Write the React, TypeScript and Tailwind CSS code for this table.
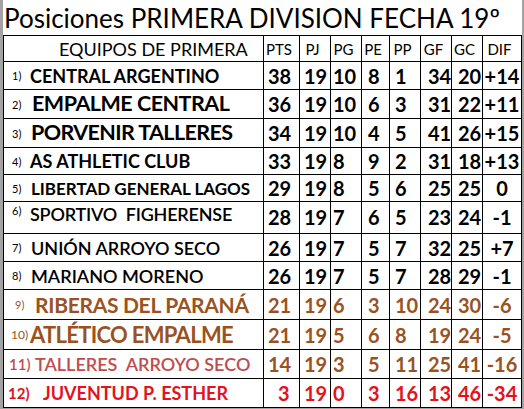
import React from "react";

type Row = {
  pos: string;
  name: string;
  stats: string[];
  h: string; // row height class
  labelCls: string;
  nameCls: string;
  numCls: string;
  top?: boolean;
};

const cols = "grid-cols-[260px_36px_31px_31px_28px_31px_31px_31px_39px]";

// per-column padding for the numbers
const numPad = [
  "pl-[4px]",
  "pl-[4px]",
  "pl-[2px]",
  "pl-[6px]",
  "pl-[5px]",
  "pl-[7px]",
  "pl-[6px]",
  "justify-center",
];

const black = "text-black";
const brown = "text-[#9a531f]";
const rose = "text-[#bf4c50]";
const red = "text-[#e3121c]";

const rows: Row[] = [
  {
    pos: "1)",
    name: "CENTRAL ARGENTINO",
    stats: ["38", "19", "10", "8", "1", "34", "20", "+14"],
    h: "h-[28px]",
    labelCls: `${black} text-[11px] w-[26px] pl-[8px]`,
    nameCls: `${black} text-[18px] font-bold`,
    numCls: black,
  },
  {
    pos: "2)",
    name: "EMPALME CENTRAL",
    stats: ["36", "19", "10", "6", "3", "31", "22", "+11"],
    h: "h-[29px]",
    labelCls: `${black} text-[11px] w-[28px] pl-[8px]`,
    nameCls: `${black} text-[21.5px] font-bold tracking-[-0.5px]`,
    numCls: black,
  },
  {
    pos: "3)",
    name: "PORVENIR TALLERES",
    stats: ["34", "19", "10", "4", "5", "41", "26", "+15"],
    h: "h-[29px]",
    labelCls: `${black} text-[11px] w-[27px] pl-[8px]`,
    nameCls: `${black} text-[21.5px] font-bold tracking-[-0.6px]`,
    numCls: black,
  },
  {
    pos: "4)",
    name: "AS ATHLETIC CLUB",
    stats: ["33", "19", "8", "9", "2", "31", "18", "+13"],
    h: "h-[27px]",
    labelCls: `${black} text-[11px] w-[26px] pl-[8px]`,
    nameCls: `${black} text-[18px] font-bold`,
    numCls: black,
  },
  {
    pos: "5)",
    name: "LIBERTAD GENERAL LAGOS",
    stats: ["29", "19", "8", "5", "6", "25", "25", "0"],
    h: "h-[27px]",
    labelCls: `${black} text-[11px] w-[27px] pl-[8px]`,
    nameCls: `${black} text-[17px] font-bold`,
    numCls: black,
  },
  {
    pos: "6)",
    name: "SPORTIVO  FIGHERENSE",
    stats: ["28", "19", "7", "6", "5", "23", "24", "-1"],
    h: "h-[32px]",
    labelCls: `${black} text-[11px] w-[26px] pl-[8px]`,
    nameCls: `${black} text-[18px] font-semibold whitespace-pre tracking-[-0.2px]`,
    numCls: black,
    top: true,
  },
  {
    pos: "7)",
    name: "UNIÓN ARROYO SECO",
    stats: ["26", "19", "7", "5", "7", "32", "25", "+7"],
    h: "h-[28px]",
    labelCls: `${black} text-[11px] w-[27px] pl-[8px]`,
    nameCls: `${black} text-[18px] font-semibold`,
    numCls: black,
  },
  {
    pos: "8)",
    name: "MARIANO MORENO",
    stats: ["26", "19", "7", "5", "7", "28", "29", "-1"],
    h: "h-[28px]",
    labelCls: `${black} text-[11px] w-[27px] pl-[8px]`,
    nameCls: `${black} text-[18px] font-semibold`,
    numCls: black,
  },
  {
    pos: "9)",
    name: "RIBERAS DEL PARANÁ",
    stats: ["21", "19", "6", "3", "10", "24", "30", "-6"],
    h: "h-[30px]",
    labelCls: `${brown} text-[11px] w-[31px] pl-[11px]`,
    nameCls: `${brown} text-[21px] font-bold tracking-[-0.3px]`,
    numCls: brown,
  },
  {
    pos: "10)",
    name: "ATLÉTICO EMPALME",
    stats: ["21", "19", "5", "6", "8", "19", "24", "-5"],
    h: "h-[30px]",
    labelCls: `${brown} text-[12px] w-[26px] pl-[7px]`,
    nameCls: `${brown} text-[22px] font-bold tracking-[-0.7px]`,
    numCls: brown,
  },
  {
    pos: "11)",
    name: "TALLERES  ARROYO SECO",
    stats: ["14", "19", "3", "5", "11", "25", "41", "-16"],
    h: "h-[29px]",
    labelCls: `${rose} text-[15px] font-semibold w-[31px] pl-[5px]`,
    nameCls: `${rose} text-[18px] font-semibold whitespace-pre`,
    numCls: brown,
  },
  {
    pos: "12)",
    name: "JUVENTUD P. ESTHER",
    stats: ["3", "19", "0", "3", "16", "13", "46", "-34"],
    h: "h-[29px]",
    labelCls: `${red} text-[15px] font-bold w-[39px] pl-[4px]`,
    nameCls: `${red} text-[18px] font-bold`,
    numCls: red,
  },
];

const headers = ["PTS", "PJ", "PG", "PE", "PP", "GF", "GC", "DIF"];

export default function App() {
  return (
    <div
      className="w-[524px] h-[409px] bg-[#a3a3a3] pl-[3px] pr-[2px] overflow-hidden"
      style={{ fontFamily: "Lato, 'Open Sans', sans-serif" }}
    >
      <div className="bg-white h-[408px] flex flex-col">
        {/* Title */}
        <div className="h-[36px] flex items-center pl-[1px] text-[26px] leading-none text-black whitespace-nowrap">
          Posiciones PRIMERA DIVISION FECHA 19º
        </div>

        <div className="border-l border-t border-black">
          {/* Header row */}
          <div className={`grid ${cols} h-[26px] border-b border-black text-black`}>
            <div className="border-r border-black flex items-center pl-[55px] pb-[2px] text-[18px]">
              EQUIPOS DE PRIMERA
            </div>
            {headers.map((h) => (
              <div
                key={h}
                className="border-r border-black flex items-center justify-center pr-[5px] pb-[2px] text-[15px]"
              >
                {h}
              </div>
            ))}
          </div>

          {rows.map((r) => (
            <div key={r.pos} className={`grid ${cols} ${r.h} border-b border-black`}>
              <div
                className={`border-r border-black flex ${
                  r.top ? "items-start pt-[3px]" : "items-center"
                } whitespace-nowrap leading-none`}
              >
                <span className={`shrink-0 ${r.labelCls}`}>{r.pos}</span>
                <span className={r.nameCls}>{r.name}</span>
              </div>
              {r.stats.map((s, i) => (
                <div
                  key={i}
                  className={`border-r border-black flex ${
                    r.top ? "items-start pt-[5px]" : "items-center"
                  } ${numPad[i]} ${
                    i === 0 && s.length === 1 ? "pl-[14px]" : ""
                  } text-[20px] font-bold leading-none ${r.numCls}`}
                >
                  {s}
                </div>
              ))}
            </div>
          ))}
        </div>
      </div>
    </div>
  );
}
